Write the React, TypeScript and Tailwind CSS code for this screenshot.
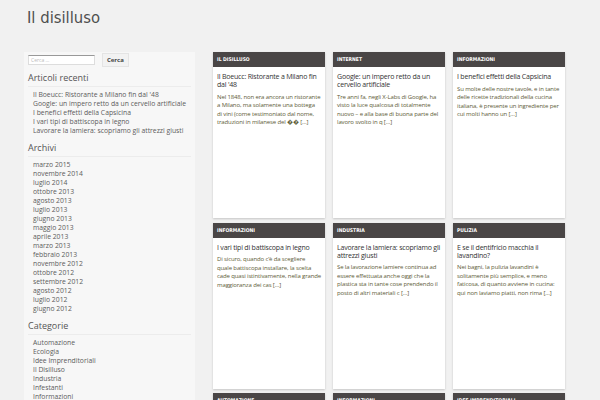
import React from "react";

const recent = [
  "Il Boeucc: Ristorante a Milano fin dal '48",
  "Google: un impero retto da un cervello artificiale",
  "I benefici effetti della Capsicina",
  "I vari tipi di battiscopa in legno",
  "Lavorare la lamiera: scopriamo gli attrezzi giusti",
];
const archives = [
  "marzo 2015","novembre 2014","luglio 2014","ottobre 2013","agosto 2013","luglio 2013","giugno 2013","maggio 2013","aprile 2013","marzo 2013","febbraio 2013","novembre 2012","ottobre 2012","settembre 2012","agosto 2012","luglio 2012","giugno 2012",
];
const cats = ["Automazione","Ecologia","Idee Imprenditoriali","Il Disilluso","Industria","Infestanti","Informazioni"];

const cards = [
  { cat: "IL DISILLUSO", title: "Il Boeucc: Ristorante a Milano fin dal '48", text: "Nel 1848, non era ancora un ristorante a Milano, ma solamente una bottega di vini (come testimoniato dal nome, traduzioni in milanese del \uFFFD\uFFFD [\u2026]" },
  { cat: "INTERNET", title: "Google: un impero retto da un cervello artificiale", text: "Tre anni fa, negli X-Labs di Google, ha visto la luce qualcosa di totalmente nuovo \u2013 e alla base di buona parte del lavoro svolto in q [\u2026]" },
  { cat: "INFORMAZIONI", title: "I benefici effetti della Capsicina", text: "Su molte delle nostre tavole, e in tante delle ricette tradizionali della cucina italiana, \u00e8 presente un ingrediente per cui molti hanno un [\u2026]" },
  { cat: "INFORMAZIONI", title: "I vari tipi di battiscopa in legno", text: "Di sicuro, quando c\u2019\u00e8 da scegliere quale battiscopa installare, la scelta cade quasi istintivamente, nella grande maggioranza dei cas [\u2026]" },
  { cat: "INDUSTRIA", title: "Lavorare la lamiera: scopriamo gli attrezzi giusti", text: "Se la lavorazione lamiere continua ad essere effettuata anche oggi che la plastica sta in tante cose prendendo il posto di altri materiali c [\u2026]" },
  { cat: "PULIZIA", title: "E se il dentifricio macchia il lavandino?", text: "Nei bagni, la pulizia lavandini \u00e8 solitamente pi\u00f9 semplice, e meno faticosa, di quanto avviene in cucina: qui non laviamo piatti, non rima [\u2026]" },
  { cat: "AUTOMAZIONE", title: "", text: "" },
  { cat: "INFORMAZIONI", title: "", text: "" },
  { cat: "IDEE IMPRENDITORIALI", title: "", text: "" },
];

function Heading({ children }: { children: React.ReactNode }) {
  return (
    <div className="text-[9px] leading-[11px] text-[#555] pb-[3px] mb-[3px] border-b border-[#ececec]">
      {children}
    </div>
  );
}

function List({ items }: { items: string[] }) {
  return (
    <ul className="pl-[5px] flex flex-col">
      {items.map((t) => (
        <li key={t} className="text-[6.8px] leading-[9px] text-[#5c5c5c] whitespace-nowrap">{t}</li>
      ))}
    </ul>
  );
}

export default function App() {
  return (
    <div className="w-[600px] h-[400px] overflow-hidden bg-[#f1f1f1]" style={{ fontFamily: "'Open Sans', 'Liberation Sans', sans-serif" }}>
      <div className="h-[52px] pl-[27px] pt-[7px]">
        <div className="text-[16.5px] leading-[22px] text-[#4f4f4f]" style={{ fontFamily: "'DejaVu Sans Condensed', 'Liberation Sans Narrow', 'DejaVu Sans', sans-serif", fontStretch: "condensed" }}>
          Il disilluso
        </div>
      </div>
      <div className="flex items-start">
        <aside className="ml-[24px] w-[171px] h-[348px] bg-[#f7f7f7] px-[4px] pt-[1px]">
          <div className="flex items-center gap-[7px] mb-[5px]">
            <div className="w-[67px] h-[10px] bg-white border border-[#ddd] border-t-[#999] text-[5px] leading-[8px] text-[#bbb] pl-[2px]">Cerca ...</div>
            <div className="h-[14px] px-[4px] bg-[#f2f2f2] border border-[#e4e4e4] text-[6px] font-bold leading-[12px] text-[#444]">Cerca</div>
          </div>
          <Heading>Articoli recenti</Heading>
          <List items={recent} />
          <div className="h-[6.5px]" />
          <Heading>Archivi</Heading>
          <List items={archives} />
          <div className="h-[7px]" />
          <Heading>Categorie</Heading>
          <List items={cats} />
        </aside>
        <main className="ml-[18px] grid grid-cols-[112px_112px_112px] gap-x-[8px] gap-y-[4.5px]">
          {cards.map((c, i) => (
            <div key={i} className="h-[166px] bg-white shadow-[0_1px_2px_rgba(0,0,0,0.18)] flex flex-col">
              <div className="h-[15px] bg-[#4a4646] px-[4px] text-[5px] leading-[15px] font-bold text-white" style={{ fontFamily: "'DejaVu Sans Condensed', 'Liberation Sans Narrow', sans-serif", fontStretch: "condensed" }}>
                {c.cat}
              </div>
              <div className="px-[4px] pt-[6px]">
                <div className="text-[7px] leading-[8px] text-[#333] tracking-[-0.2px]" style={{ fontFamily: "'Open Sans', sans-serif" }}>{c.title}</div>
                <div className="mt-[3.5px] text-[6px] leading-[8.6px] tracking-[-0.13px] text-[#5e5c38]">{c.text}</div>
              </div>
            </div>
          ))}
        </main>
      </div>
    </div>
  );
}
